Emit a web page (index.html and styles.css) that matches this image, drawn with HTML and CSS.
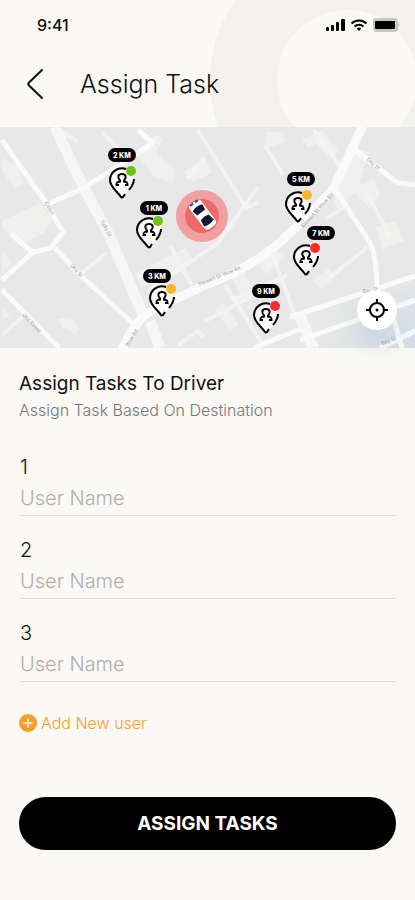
FILE: index.html
```
<!DOCTYPE html>
<html lang="en">
<head>
  <meta charset="UTF-8">
  <meta name="viewport" content="width=device-width, initial-scale=1.0">
  <title>Assign Task</title>
  <link rel="stylesheet" href="styles.css">
</head>
<body>
  <header class="header">
    <div class="status-bar">
      <span class="time">9:41</span>
      <svg class="status-icons" viewBox="0 0 74 14" aria-hidden="true">
        <rect x="0" y="9" width="3" height="4" rx="1"/>
        <rect x="5" y="7" width="3" height="6" rx="1"/>
        <rect x="10" y="4" width="3" height="9" rx="1"/>
        <rect x="15" y="1" width="4" height="12" rx="1"/>
        <g fill="none" stroke="#000" stroke-width="2">
          <path d="M25.500 5.500a11 11 0 0 1 15 0"/>
          <path d="M28.500 8.500a6.500 6.500 0 0 1 9 0"/>
        </g>
        <path d="M33 13l-2.300-2.400a3.400 3.400 0 0 1 4.600 0z"/>
        <rect x="47" y="0" width="25" height="14" rx="4" fill="#c9c7c4"/>
        <rect x="49" y="3" width="20" height="8" rx="1"/>
        <path d="M72 5c2 1 2 3 0 4z" fill="#bdbcba"/>
      </svg>
    </div>
    <div class="title-bar">
      <a class="back" href="#" aria-label="Back">
        <svg viewBox="0 0 18 32"><path d="M16 2L3 14.500q-1.500 1.500 0 3L16 30"/></svg>
      </a>
      <h1 class="title">Assign Task</h1>
    </div>
  </header>

  <main>
    <div class="map">
      <svg class="map-canvas" viewBox="0 0 415 221" role="img" aria-label="Drivers nearby">
        <defs>
          <symbol id="pin" viewBox="0 0 28 34" overflow="visible">
            <path d="M14 32C9 26 2 21 2 14a12 12 0 0 1 24 0c0 7-7 12-12 18z" fill="#fff" fill-opacity="0.800"/>
            <g fill="none" stroke="#000" stroke-width="2">
              <path d="M18 3a12 12 0 0 0-16 11c0 7 7 11 11 17q1 1 2 0l2-3M21 24c3-4 5-6 5-11"/>
              <path d="M12 16.500v-2c-3-3-2-6.500 2-6.500s5 3.500 2 6.500v2"/>
              <path d="M12 15.500c-3 0-3.500 1-3.500 3.500h2.500M16 15.500c3 0 3.500 1 3.500 3.500H17"/>
            </g>
          </symbol>
          <linearGradient id="haze" x1="0" y1="0" x2="1" y2="1">
            <stop offset="0.500" stop-color="#d4dde8" stop-opacity="0"/>
            <stop offset="1" stop-color="#d4dde8"/>
          </linearGradient>
        </defs>
        <rect width="415" height="221" fill="#e7e8e7"/>
        <rect x="305" y="140" width="110" height="81" fill="url(#haze)"/>

        <!-- lighter blocks -->
        <g fill="#f0f1ef">
          <path d="M2 31l16 8 5 18-8 5-13-18zM2 94l38-18 12 16-8 14-22 11-20-15zM138 22l20-14 6 3-8 14 20 18-4 14-18-8-16-20zM58 192l13-2 9 12-5 4-12-5zM2 123l10 12-10 12zM2 180l8 8-8 6z"/>
          <path d="M302 12l20-9 16 20-8 8-14-14-8 4zM265 5l18 0 2 10-18 6zM230 148l12-6 14 26-11 8zM223 176l16 22-10 5-14-20zM135 147l50-26 8 12-52 28zM352 62l22-10 6 16-10 14zM184 45l20-14 8 14-18 10z"/>
          <path d="M355 22l14 3-12 38-20 20-4-16zM257 137l20-14 8 8-18 16zM312 153l18-12 4 10-14 12zM376 100l20-6 8 20-22 8z"/>
        </g>

        <!-- side streets -->
        <g class="street faint">
          <path d="M198 3l48 78 12-6M265 18l18 30M314 3l30 42M205 30l-18 22M225 158l38 60M270 120l26 72 22 28M368 68l22 42M107 126l-28 22M170 118l22 40M102 5l28 28M60 3l18 12M235 172l52-24M345 80l-20 12M368 120l-38 30"/>
          <path d="M148 164l70-48 40-56M205 194l60-32M178 218l20-14 6 6M2 208l20-18"/>
        </g>
        <g class="street wide"><path d="M55 0l25 53 30 57 34 80M150 194l10 27M300 188l13 33"/></g>
        <g class="street">
          <path d="M2 13l42 60 19 32-12 16-18 4-31 28M10 106l22 19M50 76l30-13 37-23 36-24-15-13"/>
          <path d="M55 121l25 27 55 50M2 163l57 58M335 62l34 52q8 14 8 50M355 23l40 31q5 4 20 3"/>
          <path d="M290 190l125-41M300 213l115-40M380 221l35-17M390 180l12 41M254 221l46-19"/>
        </g>
        <path class="street main" d="M122 223q9-22 25-37l58-28q50-18 83-50 42-40 47-50l28-60"/>

        <g class="street-name">
          <text transform="translate(44 76) rotate(58)">Oxton</text>
          <text transform="translate(100 94) rotate(62)">Tufts St</text>
          <text transform="translate(70 139) rotate(48)">Otis St</text>
          <text transform="translate(22 188) rotate(47)">Otis Street</text>
          <text transform="translate(128 220) rotate(-58)">Wow Rd</text>
          <text transform="translate(199 159) rotate(-22)">Stewart St Wow Rd</text>
          <text transform="translate(303 101) rotate(-47)">Stewart St Wow Rd</text>
          <text transform="translate(366 33) rotate(40)">Otis St</text>
          <text transform="translate(363 166) rotate(-10)">Bay St</text>
          <text transform="translate(382 218) rotate(-20)">Bay St</text>
        </g>

        <!-- current vehicle -->
        <circle cx="202" cy="89" r="26" fill="#f0a0a0"/>
        <circle cx="202" cy="89" r="17" fill="#ee6a6a"/>
        <g transform="translate(203 88) rotate(-37)">
          <rect x="-7" y="-16" width="14" height="31" rx="4" fill="#fff"/>
          <path d="M-6-9q6-3 12 0l-1 6h-10zM-5 3q5-2 10 0l1 7q-6 2-12 0z" fill="#111a33"/>
          <path d="M-5-15h4M1-15h4" stroke="#3a35c9" stroke-width="2"/>
        </g>

        <!-- drivers -->
        <g class="driver">
          <use href="#pin" x="108" y="39" width="28" height="34"/>
          <circle cx="131" cy="44" r="5" fill="#6cc417"/>
          <rect x="108" y="21" width="28" height="14" rx="7"/>
          <text x="122" y="31">2 KM</text>
        </g>
        <g class="driver">
          <use href="#pin" x="135" y="89" width="28" height="34"/>
          <circle cx="158" cy="94" r="5" fill="#6cc417"/>
          <rect x="140" y="74" width="28" height="14" rx="7"/>
          <text x="154" y="84">1 KM</text>
        </g>
        <g class="driver">
          <use href="#pin" x="148" y="157" width="28" height="34"/>
          <circle cx="171" cy="162" r="5" fill="#fdb52b"/>
          <rect x="143" y="142" width="28" height="14" rx="7"/>
          <text x="157" y="152">3 KM</text>
        </g>
        <g class="driver">
          <use href="#pin" x="284" y="63" width="28" height="34"/>
          <circle cx="307" cy="68" r="5" fill="#fdb52b"/>
          <rect x="287" y="45" width="28" height="14" rx="7"/>
          <text x="301" y="55">5 KM</text>
        </g>
        <g class="driver">
          <use href="#pin" x="292" y="116" width="28" height="34"/>
          <circle cx="315" cy="121" r="5" fill="#f92d2d"/>
          <rect x="307" y="99" width="28" height="14" rx="7"/>
          <text x="321" y="109">7 KM</text>
        </g>
        <g class="driver">
          <use href="#pin" x="252" y="174" width="28" height="34"/>
          <circle cx="275" cy="179" r="5" fill="#f92d2d"/>
          <rect x="252" y="157" width="28" height="14" rx="7"/>
          <text x="266" y="167">9 KM</text>
        </g>
      </svg>
      <button class="locate" type="button" aria-label="Locate me">
        <svg viewBox="0 0 24 24">
          <circle cx="12" cy="12" r="7"/>
          <path d="M12 1v5M12 18v5M1 12h5M18 12h5"/>
          <circle class="dot" cx="12" cy="12" r="1.500"/>
        </svg>
      </button>
    </div>

    <form class="assign-form">
      <h2 class="form-title">Assign Tasks To Driver</h2>
      <p class="subtitle">Assign Task Based On Destination</p>

      <div class="form-group">
        <label for="user1">1</label>
        <input type="text" id="user1" name="user1" placeholder="User Name">
      </div>
      <div class="form-group">
        <label for="user2">2</label>
        <input type="text" id="user2" name="user2" placeholder="User Name">
      </div>
      <div class="form-group">
        <label for="user3">3</label>
        <input type="text" id="user3" name="user3" placeholder="User Name">
      </div>

      <button class="add-user" type="button">
        <svg viewBox="0 0 18 18" aria-hidden="true">
          <circle cx="9" cy="9" r="9" fill="#fc9d2b"/>
          <path d="M9 4.500v9M4.500 9h9" stroke="#fde3bf" stroke-width="2"/>
        </svg>
        Add New user
      </button>

      <button class="submit" type="submit">ASSIGN TASKS</button>
    </form>
  </main>
</body>
</html>
```
FILE: styles.css
```
* {
  box-sizing: border-box;
}
body {
  font-family: Inter, Roboto, Arial, sans-serif;
  background-color: #faf9f5;
  color: #111;
  margin: 0;
}
.header {
  position: relative;
  overflow: hidden;
  height: 127px;
  padding-top: 14px;
}
/* pale ring behind the title */
.header::before {
  content: "";
  position: absolute;
  z-index: -1;
  top: -57px;
  right: -69px;
  width: 140px;
  height: 140px;
  box-sizing: content-box;
  border: 67px solid #f2f1ec;
  border-radius: 50%;
}
.status-bar {
  display: flex;
  justify-content: space-between;
  align-items: center;
  height: 22px;
  padding: 0 15px 0 37px;
}
.time {
  font-size: 16px;
  font-weight: 500;
}
.status-icons {
  width: 74px;
  height: 14px;
}
.title-bar {
  display: flex;
  align-items: center;
  gap: 36px;
  height: 40px;
  margin-top: 28px;
  padding-left: 26px;
}
.back {
  display: flex;
}
.back svg {
  width: 18px;
  height: 32px;
  fill: none;
  stroke: #111;
  stroke-width: 2;
  stroke-linecap: round;
}
.title {
  font-size: 25px;
  font-weight: 300;
  margin: 0;
}

.map {
  position: relative;
}
.map-canvas {
  display: block;
  width: 100%;
}
.street {
  fill: none;
  stroke: #fafafa;
  stroke-width: 5;
  stroke-linejoin: round;
}
.street.faint {
  stroke: #f3f4f2;
  stroke-width: 4;
}
.street.wide {
  stroke: #f6f6f5;
  stroke-width: 11;
}
.street.main {
  stroke-width: 9;
}
.street-name {
  font-size: 5px;
  fill: #999;
}
.driver text {
  font-size: 7px;
  font-weight: 800;
  text-anchor: middle;
  fill: #fff;
}
.locate {
  position: absolute;
  right: 18px;
  bottom: 18px;
  display: flex;
  justify-content: center;
  align-items: center;
  width: 40px;
  height: 40px;
  padding: 0;
  border: none;
  border-radius: 50%;
  background-color: #fff;
  box-shadow: 0 16px 28px rgba(150, 180, 220, 0.3);
  cursor: pointer;
}
.locate svg {
  width: 24px;
  height: 24px;
  fill: none;
  stroke: #000;
  stroke-width: 2;
}
.locate .dot {
  fill: #000;
  stroke: none;
}

.assign-form {
  padding: 24px 19px 50px;
}
.form-title {
  font-size: 19px;
  font-weight: 400;
  line-height: 24px;
  margin: 0;
}
.subtitle {
  font-size: 16px;
  font-weight: 300;
  line-height: 20px;
  color: #777;
  margin: 4px 0 33px;
}
.form-group {
  margin: 0 0 20px 1px;
}
label {
  display: block;
  font-size: 20px;
  font-weight: 300;
  line-height: 28px;
}
input {
  display: block;
  width: 100%;
  height: 35px;
  padding: 0;
  border: none;
  border-bottom: 1px solid #dededb;
  background: none;
  font-family: inherit;
  font-size: 20px;
  font-weight: 300;
  color: #111;
}
input::placeholder {
  color: #b0b0b0;
  opacity: 1;
}
input:focus {
  outline: none;
  border-color: #fc9d2b;
}
.add-user {
  display: flex;
  align-items: center;
  gap: 4px;
  margin: 31px 0 64px;
  padding: 0;
  border: none;
  background: none;
  font-family: inherit;
  font-size: 16px;
  font-weight: 300;
  line-height: 20px;
  color: #fc9d2b;
  cursor: pointer;
}
.add-user svg {
  width: 18px;
  height: 18px;
}
.submit {
  display: block;
  width: 100%;
  height: 53px;
  border: none;
  border-radius: 27px;
  background-color: #000;
  font-family: inherit;
  font-size: 19px;
  font-weight: 700;
  color: #fff;
  cursor: pointer;
}
```
